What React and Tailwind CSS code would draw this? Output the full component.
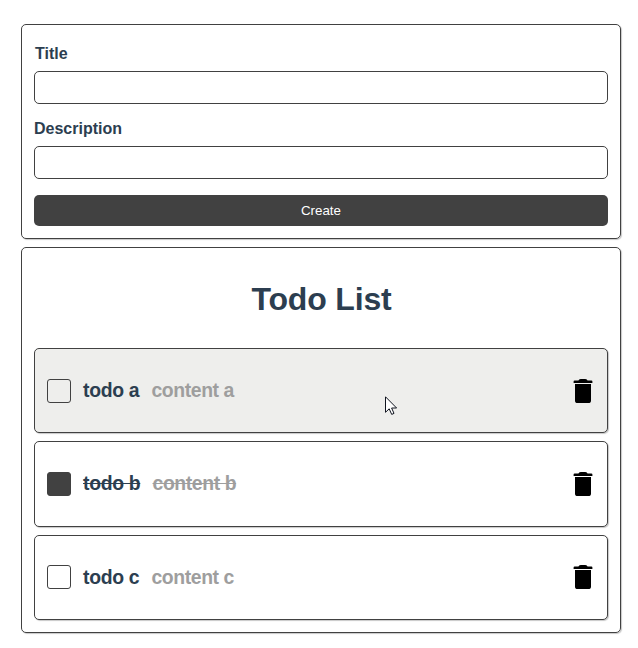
const todos = [
  { title: 'todo a', content: 'content a', done: false, hovered: true },
  { title: 'todo b', content: 'content b', done: true, hovered: false },
  { title: 'todo c', content: 'content c', done: false, hovered: false },
];

const card = 'rounded-[5px] border border-[#414141] shadow-[1px_1px_1px_#c8c8c8]';

function Field({ label, id, labelClass = '' }) {
  return (
    <div className="flex flex-col">
      <label htmlFor={id} className={`mb-2 text-base leading-[18px] font-bold ${labelClass}`}>
        {label}
      </label>
      <input id={id} className="h-[33px] w-full rounded-[5px] border border-[#414141] bg-white px-2 outline-none" />
    </div>
  );
}

function TrashIcon() {
  return (
    <svg width="20" height="24" viewBox="0 0 20 24" fill="#000" className="shrink-0">
      <path d="M5.4 1.4 Q6.4 0 8 0 H12 Q13.6 0 14.6 1.4 H18.4 Q19.4 1.4 19.4 2.4 V4 H0.6 V2.4 Q0.6 1.4 1.6 1.4 Z" />
      <path d="M2 5 H18 V21.4 A2.6 2.6 0 0 1 15.4 24 H4.6 A2.6 2.6 0 0 1 2 21.4 Z" />
    </svg>
  );
}

function TodoItem({ title, content, done, hovered }) {
  const strike = done ? 'line-through' : '';
  const text = 'pb-[1.6px] text-[19.4px] leading-[22px] font-bold';
  return (
    <li
      className={`${card} flex h-[85.33px] items-center pr-[14px] pl-3 ${hovered ? 'bg-[#eeeeec]' : 'bg-white'}`}
    >
      <span
        className={`size-6 shrink-0 rounded-[3px] border border-[#414141] ${done ? 'bg-[#414141]' : ''}`}
      />
      <h3 className={`ml-3 tracking-[-0.33px] ${text} ${strike}`}>{title}</h3>
      <h3 className={`ml-[12.3px] tracking-[-0.41px] text-[#9e9e9e] ${text} ${strike}`}>{content}</h3>
      <button className="ml-auto" aria-label="Delete">
        <TrashIcon />
      </button>
    </li>
  );
}

function Pointer() {
  return (
    <svg width="13" height="20" viewBox="0 0 13 20" className="absolute top-[396px] left-[385px]">
      <path
        d="M0.5 0.8 V16.3 L4.2 12.8 L6.7 18.4 L9 17.4 L6.6 12 H11.6 Z"
        fill="#fff"
        stroke="#10141f"
        strokeWidth="1"
      />
    </svg>
  );
}

export default function App() {
  return (
    <main className="relative flex h-[648px] w-[638px] flex-col gap-2 bg-white pt-6 pl-[21px] font-['Liberation_Sans',Arial,sans-serif] text-[#2c3e50]">
      <form className={`${card} flex h-[215px] w-[600px] flex-col gap-4 px-3 pt-5`}>
        <Field label="Title" id="title" labelClass="pl-px" />
        <Field label="Description" id="description" />
        <button
          type="button"
          className="h-[31px] shrink-0 rounded-[5px] bg-[#414141] text-[13.333px] leading-[15px] text-white"
        >
          Create
        </button>
      </form>
      <section className={`${card} h-[386px] w-[600px] px-3`}>
        <h1 className="mt-[33px] pl-px text-center text-[32px] leading-[37px] font-bold tracking-[-0.15px]">Todo List</h1>
        <ul className="mt-[30px] flex flex-col gap-2">
          {todos.map((todo) => (
            <TodoItem key={todo.title} {...todo} />
          ))}
        </ul>
      </section>
      <Pointer />
    </main>
  );
}
